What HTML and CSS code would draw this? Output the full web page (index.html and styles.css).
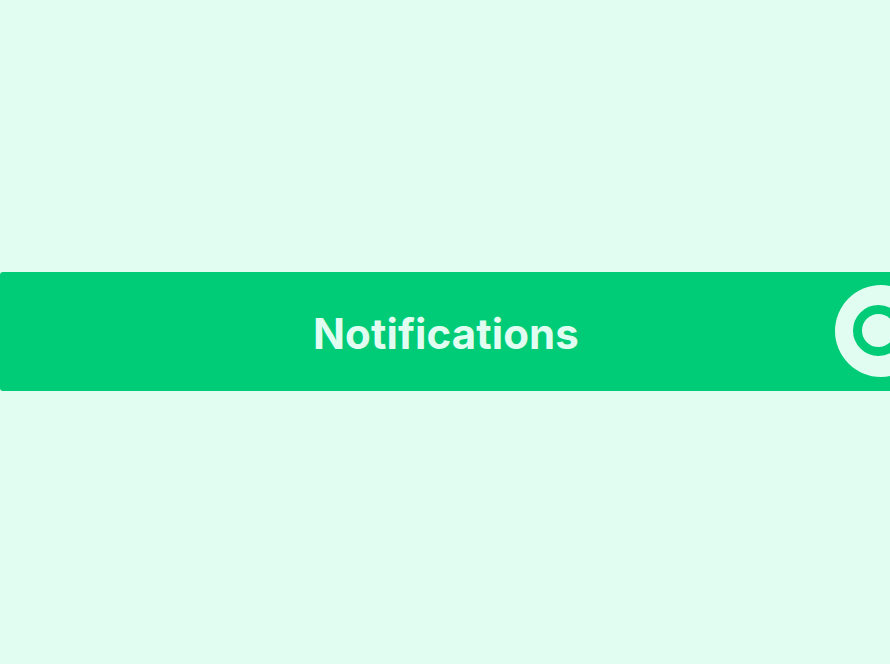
FILE: index.html
```html
<!DOCTYPE html>
<html lang="en">
<head>
<meta charset="utf-8">
<title>Notifications</title>
<link rel="stylesheet" href="styles.css">
</head>
<body>
<main class="page">
  <header class="bar">
    <h1 class="title">Notifications</h1>
    <div class="knob"><span class="ring"></span></div>
  </header>
</main>
</body>
</html>
```
FILE: styles.css
```css
html, body {
  margin: 0;
  padding: 0;
  background: #e1fdf1;
  overflow: hidden;
}
.page {
  width: 890px;
  height: 664px;
  padding-top: 272px;
  box-sizing: border-box;
}
.bar {
  position: relative;
  height: 119px;
  background: #00cc78;
  border-radius: 3px 0 0 3px;
  display: flex;
  align-items: center;
  justify-content: center;
  overflow: hidden;
}
.title {
  margin: 0;
  font-family: Inter, "Open Sans", sans-serif;
  font-weight: 700;
  font-size: 42px;
  color: #e1fdf1;
  letter-spacing: 0.1px;
  line-height: 1;
  transform: translate(1px, 2px);
}
.knob {
  position: absolute;
  left: 835px;
  top: 13px;
  width: 92px;
  height: 92px;
  border-radius: 50%;
  background: #e1fdf1;
}
.ring {
  position: absolute;
  left: 18px;
  top: 20px;
  width: 51px;
  height: 51px;
  box-sizing: border-box;
  border: 9.5px solid #00cc78;
  border-radius: 50%;
}
```
